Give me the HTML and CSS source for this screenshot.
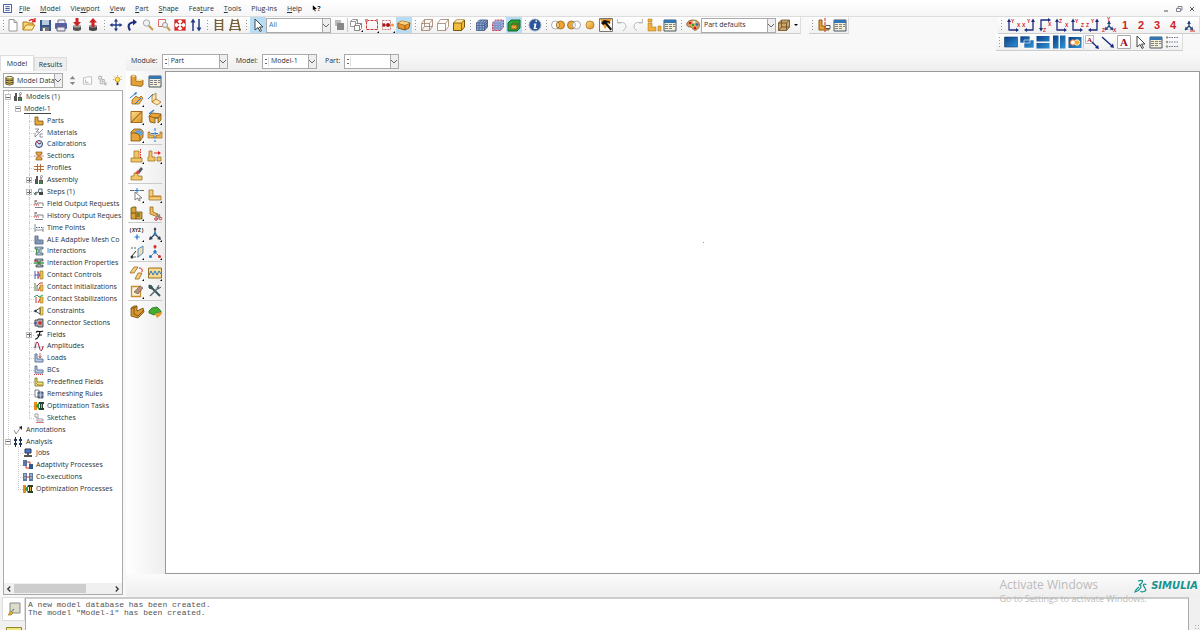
FILE: index.html
```
<!DOCTYPE html>
<html lang="en">

<head>
    <meta charset="UTF-8">
    <title>Model-1</title>
    <meta name="viewport" content="width=device-width, initial-scale=1.0">
    <link rel="stylesheet" href="styles.css">
</head>

<body>
    <!-- icon sprite -->
    <svg class="sprite" aria-hidden="true">
        <defs>
            <linearGradient id="blue" x1="0" y1="0" x2="1" y2="1">
                <stop offset="0" stop-color="#0b3f86" />
                <stop offset="1" stop-color="#2f93d6" />
            </linearGradient>
            <linearGradient id="gold" x1="0" y1="0" x2="1" y2="1">
                <stop offset="0" stop-color="#ffdf8c" />
                <stop offset="1" stop-color="#dd8f20" />
            </linearGradient>
        </defs>
        <!-- file -->
        <symbol id="new" viewBox="0 0 16 16"><path d="M4 2.500h5l3 3v8.500H4z" fill="#fff" stroke="#999" /><path d="M9 2.500v3h3" fill="none" stroke="#999" /></symbol>
        <symbol id="open" viewBox="0 0 16 16"><path d="M2 13V5h4l1 1h5v2" fill="#f7d774" stroke="#a87412" /><path d="M2 13l3-5h9l-3 5z" fill="#ffe9a0" stroke="#b8801c" /><path d="M8 4q3-3 6 0M14 1v3.500h-3" fill="none" stroke="#d22" stroke-width="1.300" /></symbol>
        <symbol id="save" viewBox="0 0 16 16"><path d="M3 3h11v11H3z" fill="#35568a" /><path d="M5 3h7v5H5z" fill="#b8cadb" /><path d="M5 10h7v4H5z" fill="#777" /><path d="M6 11h2v3H6z" fill="#eee" /></symbol>
        <symbol id="print" viewBox="0 0 16 16"><path d="M5 3h7v4H5z" fill="#eef" stroke="#778" /><rect x="2" y="6" width="12" height="6" rx="1" fill="#5661a5" /><path d="M4 10h8v4H4z" fill="#e8e8f4" stroke="#667" /></symbol>
        <symbol id="import" viewBox="0 0 16 16"><path d="M4 9v4q4 2 8 0V9z" fill="#555" /><ellipse cx="8" cy="9" rx="4" ry="1.500" fill="#aaa" /><path d="M6.500 1h3v4H12L8 9.500 4 5h2.500z" fill="#c22" /></symbol>
        <symbol id="export" viewBox="0 0 16 16"><path d="M4 9v4q4 2 8 0V9z" fill="#444" /><ellipse cx="8" cy="9" rx="4" ry="1.500" fill="#999" /><path d="M6.500 10h3V5.500H12L8 1 4 5.500h2.500z" fill="#c22" /></symbol>
        <!-- view -->
        <symbol id="pan" viewBox="0 0 16 16"><path d="M8 3v10M3 8h10" stroke="#223b86" stroke-width="1.300" /><path d="M8 1.500L6 4.500h4zM8 14.500l-2-3h4zM1.500 8l3-2v4zM14.500 8l-3-2v4z" fill="#223b86" /></symbol>
        <symbol id="rotate" viewBox="0 0 16 16"><path d="M6 13.500Q1.500 6 11 5" fill="none" stroke="#1b2f80" stroke-width="2" /><path d="M9 2l4 3-4 3.500z" fill="#1b2f80" /></symbol>
        <symbol id="zoom" viewBox="0 0 16 16"><path d="M8.500 8.500l4.500 4.500" stroke="#c59a4a" stroke-width="2" /><circle cx="6.500" cy="6" r="3.200" fill="#eef1f4" stroke="#aaa" /></symbol>
        <symbol id="zoombox" viewBox="0 0 16 16"><path d="M2.500 2.500h7v7h-7z" fill="#fff8f8" stroke="#d66" /><circle cx="9" cy="8" r="2.500" fill="#eee" stroke="#999" /><path d="M11 10l3 3.500" stroke="#c59a4a" stroke-width="2" /></symbol>
        <symbol id="fit" viewBox="0 0 16 16"><path d="M2.500 2.500h11v11h-11z" fill="#fff" stroke="#d77" /><path d="M4 4l3 3M12 4L9 7M4 12l3-3M12 12L9 9" stroke="#c22" stroke-width="1.400" /><path d="M3 3h4L3 7zM13 3v4L9 3zM3 13V9l4 4zM13 13H9l4-4z" fill="#d22" /></symbol>
        <symbol id="cycle" viewBox="0 0 16 16"><path d="M5 14V4M11 2v10" stroke="#223b86" stroke-width="1.500" /><path d="M5 1.500L2.500 5.500h5zM11 14.500l-2.500-4h5z" fill="#223b86" /></symbol>
        <symbol id="parallel" viewBox="0 0 16 16"><path d="M4.500 2v12M11.500 2v12" stroke="#7b603a" stroke-width="1.500" /><path d="M4 3.500h8M4 6.500h8M4 9.500h8M4 12.500h8" stroke="#7b603a" /></symbol>
        <symbol id="perspective" viewBox="0 0 16 16"><path d="M5.500 2L3 14M10.500 2L13 14" stroke="#7b603a" stroke-width="1.500" /><path d="M5 3.500h6M4.500 6.500h7M4 9.500h8M2 12.500h12" stroke="#7b603a" /></symbol>
        <symbol id="cursor" viewBox="0 0 16 16"><path d="M5 2v11l3-2.500 2 4 1.500-.8-2-3.700H13z" fill="#fff" stroke="#444" /></symbol>
        <!-- selection -->
        <symbol id="overlap" viewBox="0 0 16 16"><path d="M4 3h6v6H4z" fill="#bbb" /><path d="M6 6h7v7H6z" fill="#888" /></symbol>
        <symbol id="cubes" viewBox="0 0 16 16"><path d="M2.500 4.500l2-2h5v5l-2 2h-5z" fill="#fff" stroke="#999" /><path d="M2.500 4.500h5v5m0-5l2-2" fill="none" stroke="#999" /><path d="M6.500 8.500l2-2h5v5l-2 2h-5z" fill="#fff" stroke="#888" /><path d="M6.500 8.500h5v5m0-5l2-2" fill="none" stroke="#888" /><path d="M15 13v2h-2z" /></symbol>
        <symbol id="dashbox" viewBox="0 0 16 16"><path d="M2.500 3.500h11v9h-11z" fill="none" stroke="#c33" stroke-dasharray="3 1" /><path d="M1 2h3v3H1zM12 2h2v3h-2z" fill="#d88" /><path d="M15 14v2h-2z" /></symbol>
        <symbol id="dragdots" viewBox="0 0 16 16"><path d="M2.500 3.500h8v9h-8z" fill="none" stroke="#c77" stroke-dasharray="2 1" /><circle cx="4" cy="8" r="1.700" fill="#a11" /><circle cx="8" cy="8" r="2" fill="#a11" /><circle cx="12.500" cy="8" r="1.500" fill="#e9a030" /><path d="M15 14v2h-2z" /></symbol>
        <symbol id="solidsel" viewBox="0 0 16 16"><path d="M2 6l4-2 8 2-1 5-4 2-7-2z" fill="#e9942c" stroke="#8a5310" /><path d="M2 6l7 2v5M9 8l5-2" fill="none" stroke="#8a5310" /><path d="M2 6l4-2 8 2-5 2z" fill="#ffd27e" /></symbol>
        <!-- render style -->
        <symbol id="wire" viewBox="0 0 16 16"><path d="M2.500 6.500h8v7h-8zM5.500 2.500h8v7h-8zM2.500 6.500l3-4M10.500 6.500l3-4M2.500 13.500l3-4M10.500 13.500l3-4" fill="none" stroke="#a07e66" stroke-width=".8" /></symbol>
        <symbol id="hidden" viewBox="0 0 16 16"><path d="M2.500 6.500l3-4h8v7l-3 4h-8z" fill="#fff" stroke="#a07e66" stroke-width=".8" /><path d="M2.500 6.500h8v7M10.500 6.500l3-4" fill="none" stroke="#a07e66" stroke-width=".8" /></symbol>
        <symbol id="shaded" viewBox="0 0 16 16"><path d="M2.500 6l3-3h8v7l-3 3.500h-8z" fill="#f1bd3b" stroke="#79520c" /><path d="M3 6l3-3h7l-3 3z" fill="#ffe79a" /><path d="M2.500 6h8v7.500M10.500 6l3-3" fill="none" stroke="#79520c" stroke-width=".8" /></symbol>
        <symbol id="mesh" viewBox="0 0 16 16"><path d="M2.500 6l3-3h8v7l-3 3.500h-8z" fill="#91add6" stroke="#3a507f" stroke-width=".8" /><path d="M2.500 6h8v7.500M10.500 6l3-3M5 6v7.500M8 6v7.500M2.500 8.500h8l3-3M2.500 11h8l3-3M5 6l3-3M8 6l3-3M12 4.500v7" fill="none" stroke="#3a507f" stroke-width=".7" /></symbol>
        <symbol id="meshred" viewBox="0 0 16 16"><path d="M2.500 6l3-3h8v7l-3 3.500h-8z" fill="#9fb1dc" stroke="#d33" stroke-dasharray="2 1" /><path d="M2.500 6h8v7.500M10.500 6l3-3M5 6v7.500M8 6v7.500M2.500 8.500h8l3-3M2.500 11h8l3-3" fill="none" stroke="#7584bb" stroke-width=".7" /></symbol>
        <symbol id="greencube" viewBox="0 0 16 16"><path d="M2 6l3-3h9v8l-3 3H2z" fill="#25a63a" stroke="#14642a" /><path d="M5 8h6v4H5z" fill="#e9a23a" stroke="#76530f" stroke-width=".8" /><path d="M5 8l2-2h5v4l-1 2M11 8l1-2" fill="none" stroke="#76530f" stroke-width=".8" /></symbol>
        <symbol id="info" viewBox="0 0 16 16"><circle cx="8" cy="8" r="6" fill="#2a569c" stroke="#9ab" /><path d="M8.500 3.500h1.500v1.500H8.500zM7 6.500h2.500l-1 4.500H10v1H6.500L7.500 7.500H6.500z" fill="#fff" /></symbol>
        <!-- display groups -->
        <symbol id="grpand" viewBox="0 0 16 16"><circle cx="5.500" cy="8" r="4" fill="#fff" stroke="#999" stroke-width=".8" /><circle cx="10.500" cy="8" r="4" fill="#f0a431" stroke="#936316" stroke-width=".8" /><path d="M8 5a4 4 0 010 6 4 4 0 010-6" fill="#ffe2a6" stroke="#936316" stroke-width=".8" /></symbol>
        <symbol id="grpsub" viewBox="0 0 16 16"><circle cx="5.500" cy="8" r="4" fill="#f0a431" stroke="#936316" stroke-width=".8" /><circle cx="10.500" cy="8" r="4" fill="#fff" stroke="#999" stroke-width=".8" /><path d="M8 5a4 4 0 010 6 4 4 0 010-6" fill="#fff" stroke="#999" stroke-width=".8" /></symbol>
        <symbol id="grpone" viewBox="0 0 16 16"><circle cx="8" cy="8" r="4" fill="url(#gold)" stroke="#b3701b" stroke-width=".8" /></symbol>
        <symbol id="grpall" viewBox="0 0 16 16"><path d="M1.500 1.500h13v13h-13z" fill="#fbf6ec" stroke="#777" /><path d="M2 2h12L7 12z" fill="#e8982c" /><path d="M3 6l3-3 5 1q2 1 1 3l-2-2-1 1 5 6-1.500 1.500L7 7 5 8z" fill="#111" /></symbol>
        <symbol id="undo" viewBox="0 0 16 16"><path d="M3.500 5.500h5a4 4 0 013 6L9 14M3.500 2v4H7" fill="none" stroke="#bbb" /></symbol>
        <symbol id="redo" viewBox="0 0 16 16"><path d="M12.500 5.500h-5a4 4 0 00-3 6L7 14M12.500 2v4H9" fill="none" stroke="#bbb" /></symbol>
        <symbol id="parts" viewBox="0 0 16 16"><path d="M2 2h4v3H2zM2 6h4v4h4v4H2zM12 9h3v5h-3z" fill="#edb03d" stroke="#a9711a" stroke-width=".5" /></symbol>
        <symbol id="table" viewBox="0 0 16 16"><path d="M2 3h12v11H2z" fill="#f4efd4" stroke="#456" /><path d="M2 3h12v3H2z" fill="#3277b4" /><path d="M3 7.500h3M3 9.500h3M3 11.500h3M7 7.500h3M7 9.500h3M7 11.500h3M11 7.500h2M11 9.500h2" stroke="#667" stroke-width=".8" /></symbol>
        <symbol id="palette" viewBox="0 0 16 16"><path d="M8 3c8 0 8 8 3 10-3 1-3-2-5-3-3 0-5-1-4-4 1-2 3-3 6-3z" fill="#d9a566" stroke="#775022" stroke-width=".8" /><circle cx="5" cy="6" r="1.300" fill="#d11" /><circle cx="9" cy="5" r="1.300" fill="#eee" /><circle cx="12" cy="7.500" r="1.300" fill="#26c" /><circle cx="10" cy="11" r="1.300" fill="#d11" /><circle cx="8" cy="8" r="1.200" fill="#2a2" /></symbol>
        <symbol id="bodycube" viewBox="0 0 16 16"><path d="M2.500 6l3-3h8v7l-3 3.500h-8z" fill="#c9a66f" stroke="#6b4a20" stroke-width=".8" /><path d="M2.500 6h8v7.500M10.500 6l3-3M5.500 3v7h8M2.500 13.500l3-3.500" fill="none" stroke="#6b4a20" stroke-width=".8" /></symbol>
        <symbol id="lsection" viewBox="0 0 16 16"><path d="M3 3h3v6h7v4H3z" fill="#e0a137" stroke="#8a5c12" /><path d="M9 1v14" stroke="#d22" stroke-dasharray="3 1" /><path d="M10 8.500h4v3h-4" fill="#fff" stroke="#555" /></symbol>
        <!-- axis views -->
        <symbol id="axr" viewBox="0 0 16 16"><path d="M4 13V4M3.500 13H12" fill="none" stroke="#1c2b7c" stroke-width="1.300" /><path d="M4 1.500L2 5h4zM14 13l-3-2v4z" fill="#1c2b7c" /></symbol>
        <symbol id="axl" viewBox="0 0 16 16"><path d="M12 13V4M12.500 13H5" fill="none" stroke="#1c2b7c" stroke-width="1.300" /><path d="M12 1.500L10 5h4zM3 13l3-2v4z" fill="#1c2b7c" /></symbol>
        <symbol id="axd" viewBox="0 0 16 16"><path d="M4 12V3h8" fill="none" stroke="#1c2b7c" stroke-width="1.300" /><path d="M4 14.500L2 11h4zM14 3l-3-2v4z" fill="#1c2b7c" /></symbol>
        <symbol id="iso" viewBox="0 0 16 16"><path d="M8 9V4M8 9l-4 4M8 9l4 4" stroke="#26447c" stroke-width="1.300" /><path d="M8 4L6 7h4zM4 13l.5-3.500 3 3zM12 13l-3.500-.5 3-3z" fill="#26447c" /></symbol>
        <!-- viewports -->
        <symbol id="vp1" viewBox="0 0 16 16"><path d="M1.500 3h13v10h-13z" fill="url(#blue)" stroke="#123a66" stroke-width=".6" /></symbol>
        <symbol id="vp2" viewBox="0 0 16 16"><path d="M1 2h10v7H1zM5 6h10v8H5z" fill="url(#blue)" stroke="#fff" stroke-width=".6" /></symbol>
        <symbol id="vp3" viewBox="0 0 16 16"><path d="M1.500 2h13v5.500h-13zM1.500 9h13v5.500h-13z" fill="url(#blue)" /></symbol>
        <symbol id="vp4" viewBox="0 0 16 16"><path d="M2 1.500h5.500v13H2zM9 1.500h5.500v13H9z" fill="url(#blue)" /></symbol>
        <symbol id="vp5" viewBox="0 0 16 16"><path d="M1.500 3h13v11h-13z" fill="url(#blue)" /><circle cx="6" cy="8.500" r="2.700" fill="#fff" stroke="#e0662a" /><circle cx="10" cy="8.500" r="2.700" fill="#f1ad3b" stroke="#ffe9c0" /></symbol>
        <symbol id="arrowtext" viewBox="0 0 16 16"><path d="M1.500 1.500h8v8h-8z" fill="#fff" stroke="#bbb" /><path d="M8 8l5 5" stroke="#142a80" stroke-width="1.300" /><path d="M15 15l-4-1 3-3z" fill="#142a80" /></symbol>
        <symbol id="arrowline" viewBox="0 0 16 16"><path d="M2 3l10 9" stroke="#142a80" stroke-width="1.400" /><path d="M14 14l-4-1 3-3.500z" fill="#142a80" /></symbol>
        <symbol id="boxed" viewBox="0 0 16 16"><path d="M1.500 1.500h13v13h-13z" fill="#fff" stroke="#aaa" /></symbol>
        <symbol id="legend" viewBox="0 0 16 16"><path d="M5 3.500h10M5 8h10M5 12.500h10" stroke="#457" stroke-width=".8" stroke-dasharray="1.500 1" /><circle cx="3" cy="3.500" r="1.200" fill="#998" /><circle cx="3" cy="8" r="1.200" fill="#998" /><circle cx="3" cy="12.500" r="1.200" fill="#998" /></symbol>
        <!-- part toolbox -->
        <symbol id="part" viewBox="0 0 16 16"><path d="M2 3l2-1 3 1v5h5l2-1v5l-2 1.500L2 12z" fill="#e3a036" stroke="#7a5212" stroke-width=".7" /><path d="M2 3l2-1 3 1-2 1zM7 8h5l2-1-5-1z" fill="#ffdf95" /></symbol>
        <symbol id="extrude" viewBox="0 0 16 16"><path d="M3 9l4-4 3 2 2-2 2 2-4 6H3z" fill="#f0b654" stroke="#94641a" stroke-width=".8" /><path d="M1 7l6-5M6 13l6-6" stroke="#27c" /><path d="M8 1L7 4 5 2z" fill="#27c" /><path d="M15 14v2h-2z" /></symbol>
        <symbol id="shell" viewBox="0 0 16 16"><path d="M5 5l4-3v6l5 3-4 3-5-3z" fill="#ffe3ad" stroke="#a97322" stroke-width=".8" /><path d="M5 11l4-3" stroke="#a97322" /><path d="M1 8l5-5" stroke="#27c" /><path d="M15 14v2h-2z" /></symbol>
        <symbol id="planar" viewBox="0 0 16 16"><path d="M2 2.500h11v11H2z" fill="url(#gold)" stroke="#a56b1b" /><path d="M2 13.500l11-11" stroke="#7d4e0d" /><path d="M15 14v2h-2z" /></symbol>
        <symbol id="cutblock" viewBox="0 0 16 16"><path d="M2 7l3-3 9 1v6l-3 3V9H8v5l-5-1z" fill="#eaa43a" stroke="#77500f" stroke-width=".8" /><path d="M2 5l5-4" stroke="#27c" stroke-width="1.300" /><path d="M2 7l6 2h3l3-4" fill="none" stroke="#77500f" stroke-width=".8" /><path d="M15 14v2h-2z" /></symbol>
        <symbol id="round" viewBox="0 0 16 16"><path d="M2 5l3-3h6q4 1 3 5v3l-3 4H2z" fill="#e9a43a" stroke="#7c530f" stroke-width=".8" /><path d="M5 6l3-3h3q3 1 3 4L11 9q-1-3-6-3z" fill="#6aa0d4" /><path d="M2 6h4q5 1 5 5v3" fill="none" stroke="#7c530f" stroke-width=".8" /><path d="M15 14v2h-2z" /></symbol>
        <symbol id="mirror" viewBox="0 0 16 16"><path d="M1 5h2v3h4v3H1zM15 5h-2v3H9v3h6z" fill="#f0b654" stroke="#8a5c12" stroke-width=".6" /><path d="M8 1v14M4 6.500h8" stroke="#27c" stroke-dasharray="3 1" /></symbol>
        <symbol id="tshape" viewBox="0 0 16 16"><path d="M5 3h5v7h3v4H2v-4h3z" fill="#f2c666" stroke="#96691a" stroke-width=".7" /><path d="M5 10h5" stroke="#96691a" stroke-width=".7" /><path d="M11.500 1v9" stroke="#d22" stroke-dasharray="1.500 1" /><path d="M15 14v2h-2z" /></symbol>
        <symbol id="tmove" viewBox="0 0 16 16"><path d="M2 3h3v6h3v4H1V9h1zM10 9h4v4h-4z" fill="#f2c666" stroke="#96691a" stroke-width=".7" /><path d="M7 5h4" stroke="#d22" /><path d="M14 5l-3-2v4z" fill="#d22" /><path d="M15 14v2h-2z" /></symbol>
        <symbol id="erasepart" viewBox="0 0 16 16"><path d="M5 7h4v3h4v4H2v-4h3z" fill="#f2c666" stroke="#96691a" stroke-width=".7" /><path d="M8 6l4-5 2 2-4 5z" fill="#556" /><path d="M6 7l3-3 2 3-3 1z" fill="#d44" /></symbol>
        <symbol id="partedge" viewBox="0 0 16 16"><path d="M1 3.500h4M11 3.500h4" stroke="#666" /><path d="M8 1v5M5.500 3.500h5" stroke="#27c" /><path d="M6 5v8l2.500-2 1.500 3 1.200-.7L10 11h3z" fill="#fff" stroke="#666" stroke-width=".8" /><path d="M15 14v2h-2z" /></symbol>
        <symbol id="partcell" viewBox="0 0 16 16"><path d="M2 3h4v6h8v4H2z" fill="#f5cd78" stroke="#96691a" stroke-width=".7" /><path d="M2 9.500h12" stroke="#c9872a" stroke-width="1.300" /><path d="M15 14v2h-2z" /></symbol>
        <symbol id="cells" viewBox="0 0 16 16"><path d="M2 3l2-1h3v5h6v7H2z" fill="#d7a33a" stroke="#6f5011" stroke-width=".8" /><path d="M8 8h3v4H8z" fill="#6c8542" /><path d="M2 8h5v6" fill="none" stroke="#6f5011" /><path d="M15 14v2h-2z" /></symbol>
        <symbol id="cutpart" viewBox="0 0 16 16"><path d="M3 2h3v5l5 2v3L3 9z" fill="#eebc5d" stroke="#96691a" stroke-width=".8" /><path d="M9 9l5 4M13 9l-3 6" stroke="#777" /><circle cx="9" cy="14" r="1.300" fill="none" stroke="#c33" /><circle cx="13.500" cy="13.500" r="1.300" fill="none" stroke="#c33" /></symbol>
        <symbol id="xyz" viewBox="0 0 16 16"><path d="M8 8.500v5M5.500 11h5" stroke="#27c" stroke-width="1.200" /><path d="M15 14v2h-2z" /></symbol>
        <symbol id="csys" viewBox="0 0 16 16"><path d="M8 8V2M8 8l-5 5M8 8l5 5" stroke="#333f55" stroke-width="1.200" /><path d="M8 1L6.500 4h3zM2 14l1-4 3 3zM14 14l-4-1 3-3z" fill="#333f55" /><circle cx="8" cy="8" r="1.500" fill="#27c" /><path d="M15 14v2h-2z" /></symbol>
        <symbol id="datum" viewBox="0 0 16 16"><path d="M2 4h5M2 13h7" stroke="#666" stroke-dasharray="2 1" /><path d="M9 5l5-3v7l-5 4z" fill="#f4dfaa" stroke="#27c" stroke-width=".8" /><circle cx="3" cy="13" r="1.500" fill="#333" /><path d="M3 12l4-5" stroke="#333" /><path d="M15 14v2h-2z" /></symbol>
        <symbol id="refpts" viewBox="0 0 16 16"><path d="M8 8V2M8 8l-4 4M8 8l4 4" stroke="#667" stroke-dasharray="2 1" /><circle cx="8" cy="2.500" r="1.500" fill="#d22" /><circle cx="8" cy="8" r="1.700" fill="#27c" /><circle cx="3.500" cy="12.500" r="1.500" fill="#27c" /><circle cx="12.500" cy="12.500" r="1.500" fill="#d22" /><path d="M15 14v2h-2z" /></symbol>
        <symbol id="facetool" viewBox="0 0 16 16"><path d="M1 8l4-6h4L5 8zM6 14l3-6h4l-3 6z" fill="#f8cf80" stroke="#96691a" stroke-width=".8" /><path d="M10 3q4 0 3 4" fill="none" stroke="#d22" /><path d="M15 14v2h-2z" /></symbol>
        <symbol id="wave" viewBox="0 0 16 16"><path d="M1.500 3h13v10h-13z" fill="#f8d990" stroke="#9a711f" /><path d="M2 10l2-4 2 4 2-4 2 4 2-4 2 3" fill="none" stroke="#27c" /><path d="M15 14v2h-2z" /></symbol>
        <symbol id="sketchedit" viewBox="0 0 16 16"><path d="M2.500 3.500h9v10h-9z" fill="#fdf2d7" stroke="#c98b2c" stroke-width="1.300" /><path d="M5 9l6-6 3 2-5 6z" fill="#b98d79" stroke="#555" stroke-width=".6" /><path d="M15 14v2h-2z" /></symbol>
        <symbol id="tools" viewBox="0 0 16 16"><path d="M4 4l9 9" stroke="#3a5558" stroke-width="2" /><path d="M12 4l-9 9" stroke="#567" stroke-width="1.500" /><path d="M2 2l3 1v3L2 5zM10 5l2-3M14 4l-3 2" stroke="#3a5558" fill="#3a5558" /></symbol>
        <symbol id="meshpart" viewBox="0 0 16 16"><path d="M2 4l3-2h3v5l6-3 1 4-6 6-7-2z" fill="#d9972f" stroke="#6e4a10" stroke-width=".8" /><path d="M2 4h3v6l4 2 6-6M5 4l3-2" fill="none" stroke="#6e4a10" stroke-width=".8" /></symbol>
        <symbol id="plugin" viewBox="0 0 16 16"><path d="M2 7l3-3 5-1 4 4v3l-3-2-4 3-5-2z" fill="#43ad32" stroke="#246e1c" stroke-width=".8" /><path d="M8 10l6-2v3l-4 3z" fill="#e49a2a" /></symbol>
        <!-- sidebar -->
        <symbol id="db" viewBox="0 0 12 12"><path d="M2 3v7q4 2 8 0V3z" fill="#ecc545" stroke="#333" stroke-width=".8" /><ellipse cx="6" cy="3" rx="4" ry="1.500" fill="#ffef98" stroke="#333" stroke-width=".8" /><path d="M2 5.500q4 2 8 0M2 8q4 2 8 0" fill="none" stroke="#333" /></symbol>
        <symbol id="updown" viewBox="0 0 12 12"><path d="M6 1L3 4.500h6zM6 11L3 7.500h6z" fill="#888" /></symbol>
        <symbol id="folderup" viewBox="0 0 12 12"><path d="M1.500 3h3l1-1h5v8h-9z" fill="#fff" stroke="#bbb" /><path d="M4 8V5M4 8h3" stroke="#aaa" /></symbol>
        <symbol id="treeview" viewBox="0 0 12 12"><path d="M2 1.500h3v3H2zM5.500 5h2.500v2.500H5.500zM8 8.500h2v2H8zM3.500 5v4.500H7" fill="none" stroke="#aaa" /></symbol>
        <symbol id="bulb" viewBox="0 0 12 12"><path d="M6 0v1.500M1 5h1.500M9.500 5H11M2 1.500l1 1M10 1.500l-1 1" stroke="#dba520" /><circle cx="6" cy="5" r="2.500" fill="#ffe052" stroke="#c99a18" /><path d="M5 8h2v3H5z" fill="#333" /></symbol>
        <!-- tree -->
        <symbol id="t-models" viewBox="0 0 10 10"><path d="M1 9V4h1V1h2v8M5 9V5h4v4z" fill="#555" /><path d="M7 5V2" stroke="#a44" /><circle cx="7.500" cy="1.500" r="1" fill="none" stroke="#678" stroke-width=".7" /><path d="M6 6h2v3H6z" fill="#3b8a4c" /></symbol>
        <symbol id="t-part" viewBox="0 0 10 10"><path d="M1 1h3v4h5v4H1z" fill="#e7a83a" stroke="#7a5212" stroke-width=".8" /></symbol>
        <symbol id="t-mat" viewBox="0 0 10 10"><path d="M1 1h4L2 4h3M1 9l8-8M6 9V6h3M6 9h3M1 5v4" fill="none" stroke="#778" stroke-width=".8" /></symbol>
        <symbol id="t-cal" viewBox="0 0 10 10"><circle cx="5" cy="5" r="3.500" fill="#cfdcf1" stroke="#333d66" /><path d="M5 5L2 2" stroke="#c33" /><path d="M5 5l2-1" stroke="#234" /></symbol>
        <symbol id="t-sec" viewBox="0 0 10 10"><path d="M2 1h6v2L6 4v2l2 1v2H2V7l2-1V4L2 3z" fill="#e6a53b" stroke="#8a5c1c" stroke-width=".7" /><path d="M0 5h10" stroke="#c66" stroke-width=".7" /></symbol>
        <symbol id="t-prof" viewBox="0 0 10 10"><path d="M0 3.500h10M0 6.500h10M3.500 1v8M6.500 1v8" stroke="#b26a31" /></symbol>
        <symbol id="t-step" viewBox="0 0 10 10"><path d="M0 7l2-2 2 1 1-4h3v4" fill="none" stroke="#467" /><circle cx="1.500" cy="7" r="1.300" fill="#5a8a5a" /><path d="M5 5h4v3H5z" fill="#444" /></symbol>
        <symbol id="t-out" viewBox="0 0 10 10"><path d="M1 1v4h3V3M5 4h4v3M1 8.500h8" fill="none" stroke="#666" stroke-width=".8" /><path d="M0 6h6" stroke="#c33" stroke-dasharray="1 1" /><path d="M1 1h2v2H1z" fill="#b88" /></symbol>
        <symbol id="t-time" viewBox="0 0 10 10"><path d="M1 1v8M9 4v5M1 7h8" stroke="#777" stroke-width=".8" /><path d="M2 4.500h6" stroke="#36a" stroke-dasharray="1.500 1" /></symbol>
        <symbol id="t-ale" viewBox="0 0 10 10"><path d="M1 1h3v4h5v4H1z" fill="#a7bbd7" stroke="#445477" stroke-width=".8" /><path d="M1 3h3M1 5h3M1 7h8M3 5v4M6 5v4" stroke="#445477" stroke-width=".5" /></symbol>
        <symbol id="t-int" viewBox="0 0 10 10"><path d="M1 1h8v2H6v4h3v2H2V7h2V3H1z" fill="#a9c4d6" stroke="#365066" stroke-width=".7" /><path d="M2.500 3v4" stroke="#3a9a3a" /><path d="M7.500 3v4" stroke="#e0b31f" /></symbol>
        <symbol id="t-intp" viewBox="0 0 10 10"><path d="M1 1h8v2H6v4h3v2H2V7h2V3H1z" fill="#9bb" stroke="#333" stroke-width=".7" /><path d="M0 5h10" stroke="#27862b" stroke-width="1.300" /><path d="M0 3h4" stroke="#c22" /></symbol>
        <symbol id="t-cc" viewBox="0 0 10 10"><path d="M6 1h3v8H6z" fill="#e8c352" stroke="#8b6d1d" stroke-width=".6" /><path d="M1 1v8M4 1v8M1 5h4" stroke="#44a" stroke-width=".9" /><path d="M4 2l2 3-2 3" stroke="#c44" fill="none" /></symbol>
        <symbol id="t-ci" viewBox="0 0 10 10"><path d="M6 3h3v6H6z" fill="#edc14b" stroke="#97711e" stroke-width=".6" /><path d="M1 1v8M3 3v6" stroke="#5a7a5a" /><path d="M3 4l3-3h3M4 9l2-4" stroke="#c33" fill="none" /></symbol>
        <symbol id="t-cs" viewBox="0 0 10 10"><path d="M6 3h3v6H6z" fill="#edc14b" stroke="#97711e" stroke-width=".6" /><path d="M0 3l3-2 2 2 4-2" stroke="#2a9a54" fill="none" /><path d="M2 3v6M4 9l2-4" stroke="#c33" fill="none" /></symbol>
        <symbol id="t-con" viewBox="0 0 10 10"><path d="M6 1h3v8H6z" fill="#f4d555" stroke="#8b6d1d" stroke-width=".6" /><path d="M6 2L1 5l5 3z" fill="#fff" stroke="#333" stroke-width=".8" /><circle cx="1.500" cy="5" r="1.300" fill="#234" /></symbol>
        <symbol id="t-conn" viewBox="0 0 10 10"><path d="M1 2h3V1h5v8H4V8H1z" fill="#aaa" stroke="#334" stroke-width=".8" /><circle cx="6" cy="5" r="1.700" fill="#d22" /><path d="M0 5h3" stroke="#339" /></symbol>
        <symbol id="t-f" viewBox="0 0 10 10"><path d="M2 2.500Q3 1 5 1.500t4-.5M6 1.500Q5 8 2 9H1M3 5h5" fill="none" stroke="#111" stroke-width="1.200" /></symbol>
        <symbol id="t-amp" viewBox="0 0 10 10"><path d="M1 9V1M0 6h10" stroke="#99a" stroke-width=".6" /><path d="M1 7Q3-4 5 5t4 1V5" fill="none" stroke="#a24" /></symbol>
        <symbol id="t-load" viewBox="0 0 10 10"><path d="M1 1h2v5h6v3H1z" fill="#b9cbe4" stroke="#556b91" stroke-width=".9" /><path d="M6 0v5M4.500 3L6 5l1.500-2" stroke="#a44" fill="none" stroke-width=".8" /></symbol>
        <symbol id="t-bc" viewBox="0 0 10 10"><path d="M1 1h2v4h6v3H1z" fill="#b9cbe4" stroke="#556b91" stroke-width=".9" /><path d="M0 9.500h10" stroke="#c33" stroke-dasharray="1 1" /></symbol>
        <symbol id="t-pre" viewBox="0 0 10 10"><path d="M1 1h2v4h6v4H1z" fill="#ece37a" stroke="#757a2a" stroke-width=".9" /><path d="M2 6l2 2h4" stroke="#c73" fill="none" /></symbol>
        <symbol id="t-rem" viewBox="0 0 10 10"><path d="M1 1h4v7H1z" fill="#fff" stroke="#667" stroke-width=".8" /><path d="M4 3h5v6H4z" fill="#6882a8" stroke="#345" stroke-width=".8" /><path d="M4 6h5M6.500 3v6" stroke="#dde" stroke-width=".6" /></symbol>
        <symbol id="t-opt" viewBox="0 0 10 10"><path d="M0 1h3v8H0z" fill="#e88a1c" /><path d="M5 1v8L2 5z" fill="#239b46" /><path d="M5 1h5v2H9v4h1v2H5V7h1V3H5z" fill="#25402c" /><path d="M7 3h1v4H7z" fill="#e5ad1c" /></symbol>
        <symbol id="t-sk" viewBox="0 0 10 10"><path d="M1 1h3v5h5v2H3V4H1z" fill="#fff" stroke="#889" stroke-width=".8" /><path d="M2 9.500h8" stroke="#c55" stroke-width=".8" /></symbol>
        <symbol id="t-ann" viewBox="0 0 10 10"><path d="M1 5l2 4 5-7" fill="none" stroke="#777" stroke-width=".8" /><path d="M9 1v4L6 2z" fill="#222" /></symbol>
        <symbol id="t-ana" viewBox="0 0 10 10"><path d="M2.500 0v10M7.500 0v10" stroke="#223" /><path d="M1 2h3v2H1zM1 6h3v2H1zM6 2h3v2H6zM6 6h3v2H6z" fill="#1c3b5c" /></symbol>
        <symbol id="t-job" viewBox="0 0 10 10"><path d="M2 1h6v4H2z" fill="#4779db" stroke="#334" /><path d="M1 7h8v2H1z" fill="#555" /><path d="M4 5h2v2H4z" fill="#555" /></symbol>
        <symbol id="t-ada" viewBox="0 0 10 10"><path d="M0 0h4v6H0z" fill="#4c7cae" /><path d="M6 4h4v5H6z" fill="#32578a" /><path d="M3 2h4v2M3 5v3h3" stroke="#c33" fill="none" /></symbol>
        <symbol id="t-co" viewBox="0 0 10 10"><path d="M0 1h4v8H0zM6 1h4v8H6z" fill="#5d7aa5" /><path d="M1 3h2M1 6h2M7 3h2M7 6h2" stroke="#dde" /><path d="M3 5h4" stroke="#c33" /></symbol>
        <!-- message area -->
        <symbol id="msg" viewBox="0 0 14 14"><path d="M3 1h10v10H3z" fill="#dddccb" stroke="#888" /><path d="M1 13l3-4 2 2-2 2z" fill="#e1b324" stroke="#8a6d12" stroke-width=".6" /><path d="M5 9l2-2" stroke="#888" stroke-width="1.500" /></symbol>
        <symbol id="cli" viewBox="0 0 16 12"><path d="M.5.500h15v11H.5z" fill="#f1e87b" stroke="#8c8632" /><path d="M2 5h12" stroke="#554" stroke-dasharray="2 1" /></symbol>
    </svg>

    <header class="menubar">
        <svg class="app-icon" viewBox="0 0 10 10"><path d="M.5.500h9v9h-9z" fill="#fff" stroke="#2a4a96" /><path d="M2.500 3h5M2.500 5h5M2.500 7h5" stroke="#2a4a96" /></svg>
        <nav class="menus">
            <button><u>F</u>ile</button>
            <button><u>M</u>odel</button>
            <button>Vie<u>w</u>port</button>
            <button><u>V</u>iew</button>
            <button><u>P</u>art</button>
            <button><u>S</u>hape</button>
            <button>Fea<u>t</u>ure</button>
            <button><u>T</u>ools</button>
            <button>Plu<u>g</u>-ins</button>
            <button><u>H</u>elp</button>
            <button class="whats" aria-label="Context help"><svg viewBox="0 0 6 10"><path d="M1 1v6l1.500-1 1 2.500 1-.5-1-2.500H6z" /></svg>?</button>
        </nav>
        <div class="window-buttons">
            <button aria-label="Minimize"><svg viewBox="0 0 8 8"><path d="M2 6h4" stroke="#555" /></svg></button>
            <button aria-label="Restore"><svg viewBox="0 0 8 8"><path d="M1.500 3.500h4v3h-4zM3 3V1.500h4V5H6" fill="none" stroke="#667" stroke-width=".8" /></svg></button>
            <button aria-label="Close"><svg viewBox="0 0 8 8"><path d="M2 2l4 4M6 2L2 6" stroke="#555" /></svg></button>
        </div>
    </header>

    <div class="toolbars">
        <div class="toolbar-left">
            <div class="toolbar">
                <i class="grip tight"></i>
                <button class="tool" aria-label="New"><svg><use href="#new" /></svg></button>
                <button class="tool" aria-label="Open"><svg><use href="#open" /></svg></button>
                <button class="tool" aria-label="Save"><svg><use href="#save" /></svg></button>
                <button class="tool" aria-label="Print"><svg><use href="#print" /></svg></button>
                <button class="tool" aria-label="Import"><svg><use href="#import" /></svg></button>
                <button class="tool" aria-label="Export"><svg><use href="#export" /></svg></button>
                <i class="grip"></i>
                <button class="tool" aria-label="Pan"><svg><use href="#pan" /></svg></button>
                <button class="tool" aria-label="Rotate"><svg><use href="#rotate" /></svg></button>
                <button class="tool" aria-label="Magnify"><svg><use href="#zoom" /></svg></button>
                <button class="tool" aria-label="Box zoom"><svg><use href="#zoombox" /></svg></button>
                <button class="tool" aria-label="Auto-fit"><svg><use href="#fit" /></svg></button>
                <button class="tool" aria-label="Cycle views"><svg><use href="#cycle" /></svg></button>
                <i class="grip"></i>
                <button class="tool" aria-label="Parallel"><svg><use href="#parallel" /></svg></button>
                <button class="tool" aria-label="Perspective"><svg><use href="#perspective" /></svg></button>
                <i class="grip"></i>
                <button class="tool active" aria-label="Select"><svg><use href="#cursor" /></svg></button>
                <span class="combo filter"><select aria-label="Selection filter"><option>All</option></select></span>
                <button class="tool" aria-label="Selection options"><svg><use href="#overlap" /></svg></button>
                <i class="divider"></i>
                <button class="tool" aria-label="Select from"><svg><use href="#cubes" /></svg></button>
                <button class="tool" aria-label="Drag shape"><svg><use href="#dashbox" /></svg></button>
                <button class="tool" aria-label="Drag scope"><svg><use href="#dragdots" /></svg></button>
                <button class="tool active" aria-label="Highlight"><svg><use href="#solidsel" /></svg></button>
                <i class="grip"></i>
                <button class="tool" aria-label="Wireframe"><svg><use href="#wire" /></svg></button>
                <button class="tool" aria-label="Hidden line"><svg><use href="#hidden" /></svg></button>
                <button class="tool" aria-label="Shaded"><svg><use href="#shaded" /></svg></button>
                <i class="grip"></i>
                <button class="tool" aria-label="Show mesh"><svg><use href="#mesh" /></svg></button>
                <button class="tool" aria-label="Mesh edges"><svg><use href="#meshred" /></svg></button>
                <button class="tool active" aria-label="Reference"><svg><use href="#greencube" /></svg></button>
                <i class="grip tight"></i>
                <button class="tool" aria-label="Query"><svg><use href="#info" /></svg></button>
                <i class="grip"></i>
                <button class="tool" aria-label="Replace group"><svg><use href="#grpand" /></svg></button>
                <button class="tool" aria-label="Remove group"><svg><use href="#grpsub" /></svg></button>
                <button class="tool" aria-label="Either"><svg><use href="#grpone" /></svg></button>
                <button class="tool" aria-label="Replace all"><svg><use href="#grpall" /></svg></button>
                <button class="tool" aria-label="Undo"><svg><use href="#undo" /></svg></button>
                <button class="tool" aria-label="Redo"><svg><use href="#redo" /></svg></button>
                <button class="tool" aria-label="Create display group"><svg><use href="#parts" /></svg></button>
                <button class="tool" aria-label="Display group manager"><svg><use href="#table" /></svg></button>
                <i class="grip"></i>
                <button class="tool" aria-label="Color code"><svg><use href="#palette" /></svg></button>
                <span class="combo color"><select aria-label="Color mapping"><option>Part defaults</option></select></span>
                <button class="tool" aria-label="Translucency"><svg><use href="#bodycube" /></svg></button>
                <button class="more" aria-label="More"><svg viewBox="0 0 8 8"><path d="M2 3h4L4 5z" /></svg></button>
            </div>
            <div class="toolbar">
                <i class="grip"></i>
                <button class="tool" aria-label="View cut"><svg><use href="#lsection" /></svg></button>
                <button class="tool" aria-label="View cut manager"><svg><use href="#table" /></svg></button>
            </div>
        </div>
        <div class="toolbar-right">
            <div class="toolbar">
                <i class="grip"></i>
                <button class="tool" aria-label="Front view"><svg><use href="#axr" /><text x="6" y="6">Y</text><text x="12" y="10">X</text></svg></button>
                <button class="tool" aria-label="Back view"><svg><use href="#axl" /><text x="6" y="6">Y</text><text x="1" y="10">X</text></svg></button>
                <button class="tool" aria-label="Top view"><svg><use href="#axd" /><text x="11" y="9">X</text><text x="6" y="15">Z</text></svg></button>
                <button class="tool" aria-label="Bottom view"><svg><use href="#axr" /><text x="6" y="6">Z</text><text x="12" y="10">X</text></svg></button>
                <button class="tool" aria-label="Left view"><svg><use href="#axr" /><text x="6" y="6">Y</text><text x="12" y="10">Z</text></svg></button>
                <button class="tool" aria-label="Right view"><svg><use href="#axl" /><text x="6" y="6">Y</text><text x="1" y="10">Z</text></svg></button>
                <button class="tool" aria-label="Iso view"><svg><use href="#iso" /><text x="6" y="4">Y</text><text x="1" y="15">Z</text><text x="12" y="15">X</text></svg></button>
                <button class="tool digit">1</button>
                <button class="tool digit">2</button>
                <button class="tool digit">3</button>
                <button class="tool digit">4</button>
                <button class="tool" aria-label="Specify view"><svg><use href="#iso" /><path d="M9 14h5" stroke="#d22" /></svg></button>
            </div>
            <div class="toolbar second">
                <i class="grip"></i>
                <button class="tool" aria-label="Create viewport"><svg><use href="#vp1" /></svg></button>
                <button class="tool" aria-label="Cascade viewports"><svg><use href="#vp2" /></svg></button>
                <button class="tool" aria-label="Tile horizontally"><svg><use href="#vp3" /></svg></button>
                <button class="tool" aria-label="Tile vertically"><svg><use href="#vp4" /></svg></button>
                <button class="tool" aria-label="Link viewports"><svg><use href="#vp5" /></svg></button>
                <i class="divider"></i>
                <button class="tool" aria-label="Text arrow"><svg><use href="#arrowtext" /><text class="letter small" x="3" y="8">A</text></svg></button>
                <button class="tool" aria-label="Arrow"><svg><use href="#arrowline" /></svg></button>
                <button class="tool" aria-label="Text"><svg><use href="#boxed" /><text class="letter" x="4" y="12">A</text></svg></button>
                <button class="tool" aria-label="Edit annotation"><svg><use href="#cursor" /></svg></button>
                <button class="tool" aria-label="Annotation manager"><svg><use href="#table" /></svg></button>
                <button class="tool" aria-label="Annotation options"><svg><use href="#legend" /></svg></button>
            </div>
        </div>
    </div>

    <div class="main">
        <aside class="sidebar">
            <div class="tabs" role="tablist">
                <button class="tab selected" role="tab">Model</button>
                <button class="tab" role="tab">Results</button>
            </div>
            <div class="tree-tools">
                <span class="combo database"><svg><use href="#db" /></svg><select aria-label="Tree database"><option>Model Data</option></select></span>
                <button aria-label="Step"><svg><use href="#updown" /></svg></button>
                <button aria-label="Up one level"><svg><use href="#folderup" /></svg></button>
                <button aria-label="Set as root"><svg><use href="#treeview" /></svg></button>
                <button aria-label="Tips"><svg><use href="#bulb" /></svg></button>
            </div>
            <div class="tree-box">
                <ul class="tree" role="tree">
                    <li class="top"><i class="exp minus"></i><svg><use href="#t-models" /></svg>Models (1)</li>
                    <li class="model"><i class="exp minus"></i><span class="current">Model-1</span></li>
                    <li class="item"><svg><use href="#t-part" /></svg>Parts</li>
                    <li class="item"><svg><use href="#t-mat" /></svg>Materials</li>
                    <li class="item"><svg><use href="#t-cal" /></svg>Calibrations</li>
                    <li class="item"><svg><use href="#t-sec" /></svg>Sections</li>
                    <li class="item"><svg><use href="#t-prof" /></svg>Profiles</li>
                    <li class="item"><i class="exp"></i><svg><use href="#t-models" /></svg>Assembly</li>
                    <li class="item"><i class="exp"></i><svg><use href="#t-step" /></svg>Steps (1)</li>
                    <li class="item"><svg><use href="#t-out" /></svg>Field Output Requests</li>
                    <li class="item"><svg><use href="#t-out" /></svg>History Output Reques</li>
                    <li class="item"><svg><use href="#t-time" /></svg>Time Points</li>
                    <li class="item"><svg><use href="#t-ale" /></svg>ALE Adaptive Mesh Co</li>
                    <li class="item"><svg><use href="#t-int" /></svg>Interactions</li>
                    <li class="item"><svg><use href="#t-intp" /></svg>Interaction Properties</li>
                    <li class="item"><svg><use href="#t-cc" /></svg>Contact Controls</li>
                    <li class="item"><svg><use href="#t-ci" /></svg>Contact Initializations</li>
                    <li class="item"><svg><use href="#t-cs" /></svg>Contact Stabilizations</li>
                    <li class="item"><svg><use href="#t-con" /></svg>Constraints</li>
                    <li class="item"><svg><use href="#t-conn" /></svg>Connector Sections</li>
                    <li class="item"><i class="exp"></i><svg><use href="#t-f" /></svg>Fields</li>
                    <li class="item"><svg><use href="#t-amp" /></svg>Amplitudes</li>
                    <li class="item"><svg><use href="#t-load" /></svg>Loads</li>
                    <li class="item"><svg><use href="#t-bc" /></svg>BCs</li>
                    <li class="item"><svg><use href="#t-pre" /></svg>Predefined Fields</li>
                    <li class="item"><svg><use href="#t-rem" /></svg>Remeshing Rules</li>
                    <li class="item"><svg><use href="#t-opt" /></svg>Optimization Tasks</li>
                    <li class="item last"><svg><use href="#t-sk" /></svg>Sketches</li>
                    <li class="top"><svg><use href="#t-ann" /></svg>Annotations</li>
                    <li class="top"><i class="exp minus"></i><svg><use href="#t-ana" /></svg>Analysis</li>
                    <li class="job"><svg><use href="#t-job" /></svg>Jobs</li>
                    <li class="job"><svg><use href="#t-ada" /></svg>Adaptivity Processes</li>
                    <li class="job"><svg><use href="#t-co" /></svg>Co-executions</li>
                    <li class="job last"><svg><use href="#t-opt" /></svg>Optimization Processes</li>
                </ul>
                <div class="scrollbar">
                    <button aria-label="Scroll left"><svg viewBox="0 0 8 8"><path d="M5 2L3 4l2 2" fill="none" stroke="#333" /></svg></button>
                    <div class="track"><div class="thumb"></div></div>
                    <button aria-label="Scroll right"><svg viewBox="0 0 8 8"><path d="M3 2l2 2-2 2" fill="none" stroke="#333" /></svg></button>
                </div>
            </div>
        </aside>

        <section class="work">
            <div class="context">
                <label for="module">Module:</label>
                <span class="combo module"><i class="spin"></i><select id="module"><option>Part</option></select></span>
                <label for="model">Model:</label>
                <span class="combo model-name"><i class="spin"></i><select id="model"><option>Model-1</option></select></span>
                <label for="part-name">Part:</label>
                <span class="combo part-name"><i class="spin"></i><select id="part-name"><option></option></select></span>
            </div>
            <div class="stage">
                <div class="toolbox">
                    <div class="group">
                        <button class="tool" aria-label="Create part"><svg><use href="#part" /></svg></button>
                        <button class="tool" aria-label="Part manager"><svg><use href="#table" /></svg></button>
                        <button class="tool" aria-label="Solid extrude"><svg><use href="#extrude" /></svg></button>
                        <button class="tool" aria-label="Shell extrude"><svg><use href="#shell" /></svg></button>
                        <button class="tool" aria-label="Wire"><svg><use href="#planar" /></svg></button>
                        <button class="tool" aria-label="Cut extrude"><svg><use href="#cutblock" /></svg></button>
                        <button class="tool" aria-label="Round"><svg><use href="#round" /></svg></button>
                        <button class="tool" aria-label="Mirror"><svg><use href="#mirror" /></svg></button>
                    </div>
                    <div class="group">
                        <button class="tool" aria-label="Edit feature"><svg><use href="#tshape" /></svg></button>
                        <button class="tool" aria-label="Regenerate"><svg><use href="#tmove" /></svg></button>
                        <button class="tool" aria-label="Delete feature"><svg><use href="#erasepart" /></svg></button>
                    </div>
                    <div class="group">
                        <button class="tool" aria-label="Partition edge"><svg><use href="#partedge" /></svg></button>
                        <button class="tool" aria-label="Partition face"><svg><use href="#partcell" /></svg></button>
                        <button class="tool" aria-label="Partition cell"><svg><use href="#cells" /></svg></button>
                        <button class="tool" aria-label="Cut partition"><svg><use href="#cutpart" /></svg></button>
                    </div>
                    <div class="group">
                        <button class="tool" aria-label="Datum point"><svg><use href="#xyz" /><text class="coords" x="0" y="6">(XYZ)</text></svg></button>
                        <button class="tool" aria-label="Datum axis"><svg><use href="#csys" /></svg></button>
                        <button class="tool" aria-label="Datum plane"><svg><use href="#datum" /></svg></button>
                        <button class="tool" aria-label="Datum CSYS"><svg><use href="#refpts" /></svg></button>
                    </div>
                    <div class="group">
                        <button class="tool" aria-label="Edit faces"><svg><use href="#facetool" /></svg></button>
                        <button class="tool" aria-label="Repair edges"><svg><use href="#wave" /></svg></button>
                        <button class="tool" aria-label="Remove faces"><svg><use href="#sketchedit" /></svg></button>
                        <button class="tool" aria-label="Repair tools"><svg><use href="#tools" /></svg></button>
                    </div>
                    <div class="group">
                        <button class="tool" aria-label="Midsurface"><svg><use href="#meshpart" /></svg></button>
                        <button class="tool" aria-label="Plug-in"><svg><use href="#plugin" /></svg></button>
                    </div>
                </div>
                <main class="viewport"><i class="origin"></i></main>
            </div>
            <div class="prompt">
                <div class="brand">
                    <svg viewBox="0 0 14 14"><path d="M4 2q5-1.500 4.500.5T5 6q3 0 1.500 3T1 13q1-3 4-5M12.500 5.500q-4-1-3 1t2 3.500-1.500 2.500-3.500-.5" fill="none" stroke="#17938f" stroke-width="1.200" /></svg>
                    <span>SIMULIA</span>
                </div>
            </div>
        </section>
    </div>

    <footer class="messages">
        <div class="message-tabs">
            <button class="on" aria-label="Message area"><svg class="msg"><use href="#msg" /></svg></button>
            <button aria-label="Command line"><svg class="cli"><use href="#cli" /></svg></button>
        </div>
        <div class="log">
            <p>A new model database has been created.</p>
            <p>The model "Model-1" has been created.</p>
        </div>
        <i class="resizer"></i>
    </footer>

    <div class="activate">
        <strong>Activate Windows</strong>
        <span>Go to Settings to activate Windows.</span>
    </div>
</body>

</html>
```
FILE: styles.css
```
* {
    box-sizing: border-box;
}

body {
    margin: 0;
    height: 100vh;
    display: flex;
    flex-direction: column;
    overflow: hidden;
    background: #f8f8f8;
    color: #26323c;
    font-family: "Open Sans", "Noto Sans", sans-serif;
    font-size: 7px;
    line-height: 12px;
}

button,
select {
    margin: 0;
    padding: 0;
    border: none;
    background: none;
    color: inherit;
    font: inherit;
}

svg {
    display: block;
    flex: none;
}

.sprite {
    position: absolute;
    width: 0;
    height: 0;
}

/* menu bar */
.menubar {
    display: flex;
    align-items: center;
    height: 17px;
    flex: none;
    padding: 1px 0 0 3px;
    background: linear-gradient(#fff, #f6f6f6);
    border-bottom: 1px solid #ddd;
}

.app-icon {
    width: 9px;
    height: 9px;
}

.menus {
    display: flex;
    gap: 10px;
    margin-left: 7px;
}

.menus u {
    text-underline-offset: 1px;
}

.whats {
    display: flex;
    align-items: center;
    font-weight: bold;
}

.whats svg {
    width: 5px;
    height: 9px;
}

.window-buttons {
    display: flex;
    gap: 5px;
    margin-left: auto;
    padding-right: 4px;
}

.window-buttons svg {
    width: 8px;
    height: 8px;
}

/* toolbars */
.toolbars {
    display: flex;
    justify-content: space-between;
    flex: none;
    height: 34px;
}

.toolbar-left {
    display: flex;
    align-items: flex-start;
    gap: 8px;
}

.toolbar-right {
    display: flex;
    flex-direction: column;
    align-items: flex-end;
}

.toolbar {
    display: flex;
    align-items: center;
    height: 17px;
    background: linear-gradient(#fff, #f0f0f0);
    border-bottom: 1px solid #ccc;
    border-right: 1px solid #ddd;
}

.toolbar-right .toolbar {
    padding-right: 2px;
}

.second {
    margin-right: 17px;
}

.grip {
    width: 7px;
    height: 12px;
    background: radial-gradient(circle, #999 1px, transparent 1px) 2px 0 / 3px 3px repeat-y;
}

.tight {
    width: 5px;
}

.divider {
    width: 1px;
    height: 14px;
    background: #ccc;
}

.tool {
    width: 16px;
    height: 16px;
}

.tool svg {
    width: 16px;
    height: 16px;
    overflow: visible;
}

.toolbar .active {
    background: #b9dcf5;
}

.tool text {
    fill: #d2232a;
    font: bold 5px "Liberation Sans", sans-serif;
}

.tool .letter {
    fill: #9a1018;
    font: bold 11px "Liberation Serif", serif;
}

.tool .small {
    font-size: 7px;
}

.tool .coords {
    fill: #222;
    font: bold 5px "Liberation Mono", monospace;
}

.digit {
    color: #d2232a;
    font: bold 11px "Liberation Sans", sans-serif;
}

.more svg {
    width: 8px;
    height: 8px;
}

/* drop-downs */
.combo {
    position: relative;
    display: flex;
    align-items: center;
    height: 15px;
    background: #fff;
    border: 1px solid #aaa;
}

.combo select {
    flex: 1;
    min-width: 0;
    height: 12px;
    padding-left: 2px;
    appearance: none;
    outline: none;
    line-height: 12px;
}

.combo::after {
    content: "";
    position: absolute;
    top: 0;
    right: 0;
    bottom: 0;
    width: 7px;
    border-left: 1px solid #aaa;
    background: linear-gradient(45deg, transparent 40%, #666 40%, #666 60%, transparent 60%) 0 5px / 3px 3px no-repeat,
        linear-gradient(-45deg, transparent 40%, #666 40%, #666 60%, transparent 60%) 3px 5px / 3px 3px no-repeat,
        #eee;
    pointer-events: none;
}

.filter {
    width: 65px;
    color: #3672a8;
}

.color {
    width: 75px;
}

.module {
    width: 66px;
}

.model-name {
    width: 55px;
}

.part-name {
    width: 55px;
}

.spin {
    width: 5px;
    height: 9px;
    margin-left: 1px;
    background: linear-gradient(#666, #666) 1px 2px / 2px 1px no-repeat,
        linear-gradient(#666, #666) 1px 6px / 2px 1px no-repeat;
    border-right: 1px solid #ddd;
}

/* model tree */
.main {
    display: flex;
    flex: 1;
    min-height: 0;
}

.sidebar {
    display: flex;
    flex-direction: column;
    width: 126px;
    flex: none;
    padding: 4px 3px 2px 0;
}

.tabs {
    display: flex;
    align-items: flex-end;
    height: 16px;
}

.tab {
    height: 14px;
    width: 33px;
    border: 1px solid #ddd;
    border-bottom: none;
    background: #eee;
}

.tab.selected {
    width: 34px;
    height: 16px;
    background: #fff;
}

.tree-tools {
    display: flex;
    align-items: center;
    justify-content: space-between;
    height: 19px;
    padding-left: 3px;
}

.tree-tools svg {
    width: 11px;
    height: 11px;
}

.database {
    width: 60px;
}

.tree-box {
    display: flex;
    flex-direction: column;
    flex: 1;
    min-height: 0;
    margin-left: 3px;
    background: #fff;
    border: 1px solid #aaa;
}

.tree {
    display: grid;
    grid-auto-rows: 1fr;
    height: 404px;
    margin: 0;
    padding: 0;
    list-style: none;
    overflow: hidden;
}

/* dotted guides */
.tree li {
    position: relative;
    display: flex;
    align-items: center;
    gap: 3px;
    min-height: 0;
    white-space: nowrap;
    background: repeating-linear-gradient(#ccc 0 1px, #fff 1px 2px) 4px 0 / 1px 100% no-repeat;
}

.tree li > svg {
    width: 10px;
    height: 10px;
}

.tree .top {
    padding-left: 9px;
}

.tree .model {
    padding-left: 20px;
}

.tree .item {
    padding-left: 30px;
}

.tree .job {
    padding-left: 19px;
    background: repeating-linear-gradient(#ccc 0 1px, #fff 1px 2px) 14px 0 / 1px 100% no-repeat;
}

.tree .item::before {
    content: "";
    position: absolute;
    left: 25px;
    top: 0;
    bottom: 0;
    border-left: 1px dotted #ccc;
}

.tree .item::after,
.tree .job::after {
    content: "";
    position: absolute;
    left: 25px;
    top: 6px;
    width: 5px;
    border-top: 1px dotted #ccc;
}

.tree .job::after {
    left: 14px;
}

.tree .item.last::before {
    bottom: 6px;
}

.tree .job.last {
    background-size: 1px 50%;
}

.exp {
    position: absolute;
    z-index: 1;
    left: 1px;
    top: 3px;
    width: 6px;
    height: 6px;
    border: 1px solid #bbb;
    background: linear-gradient(#667, #667) center / 4px 1px no-repeat,
        linear-gradient(#667, #667) center / 1px 4px no-repeat, #fff;
}

.exp.minus {
    background: linear-gradient(#667, #667) center / 4px 1px no-repeat, #fff;
}

.model .exp {
    left: 11px;
}

.item .exp {
    left: 22px;
}

.current {
    line-height: 9px;
    border-bottom: 1px solid #444;
}

.scrollbar {
    display: flex;
    align-items: center;
    height: 11px;
    margin-top: auto;
    background: #f0f0f0;
}

.scrollbar svg {
    width: 10px;
    height: 10px;
}

.track {
    flex: 1;
}

.thumb {
    width: 73%;
    height: 9px;
    background: #cdcdcd;
}

/* work area */
.work {
    display: flex;
    flex-direction: column;
    flex: 1;
    min-width: 0;
}

.context {
    display: flex;
    align-items: center;
    height: 20px;
    flex: none;
    padding-left: 5px;
    background: linear-gradient(#fafafa, #eee);
}

.context label {
    margin-right: 4px;
}

.context .combo {
    margin-right: 8px;
}

.stage {
    display: flex;
    flex: 1;
    min-height: 0;
}

.toolbox {
    width: 39px;
    flex: none;
    padding: 1px 3px 0 2px;
    background: linear-gradient(90deg, #fff, #eee);
}

.group {
    display: grid;
    grid-template-columns: 18px 18px;
    grid-auto-rows: 18px;
    place-items: center;
    padding-top: 2px;
    border-bottom: 1px solid #ccc;
}

.group:first-child {
    padding: 0;
}

.group:last-child {
    border-bottom: none;
}

.viewport {
    position: relative;
    flex: 1;
    background: #fff;
    border: 1px solid #999;
}

.origin {
    position: absolute;
    left: 52%;
    top: 34%;
    width: 1px;
    height: 1px;
    background: #999;
}

.prompt {
    display: flex;
    align-items: center;
    justify-content: flex-end;
    height: 23px;
    flex: none;
    padding-right: 2px;
    background: linear-gradient(#fbfbfb, #eee);
}

.brand {
    display: flex;
    align-items: center;
    gap: 3px;
    color: #17938f;
    font: italic bold 10px "DejaVu Sans", sans-serif;
}

.brand svg {
    width: 14px;
    height: 14px;
}

/* message area */
.messages {
    display: flex;
    height: 33px;
    flex: none;
    padding-right: 11px;
    position: relative;
    background: #f0f0f0;
}

.message-tabs {
    width: 23px;
    margin-left: 2px;
    flex: none;
    overflow: hidden;
}

.message-tabs button {
    display: flex;
    align-items: center;
    justify-content: center;
    width: 23px;
    height: 24px;
}

.message-tabs .on {
    background: #fff;
    border: 1px solid #ddd;
}

.msg {
    width: 14px;
    height: 14px;
}

.cli {
    width: 16px;
    height: 20px;
}

.log {
    flex: 1;
    padding: 2px;
    background: #fff;
    border: 1px solid #aaa;
    border-width: 2px 1px 0;
    border-top-color: #ccc;
    color: #555;
    font: 8px/8px "Liberation Mono", monospace;
}

.log p {
    margin: 0;
}

.resizer {
    position: absolute;
    right: 0;
    bottom: 0;
    width: 6px;
    height: 6px;
    background: radial-gradient(circle, #aaa 1px, transparent 1px) 0 0 / 3px 3px;
}

/* Windows watermark */
.activate {
    position: absolute;
    right: 53px;
    bottom: 25px;
    display: flex;
    flex-direction: column;
    color: #bbb;
    font-size: 9px;
    white-space: nowrap;
    pointer-events: none;
}

.activate strong {
    font-size: 12px;
    font-weight: normal;
    line-height: 16px;
}
```
